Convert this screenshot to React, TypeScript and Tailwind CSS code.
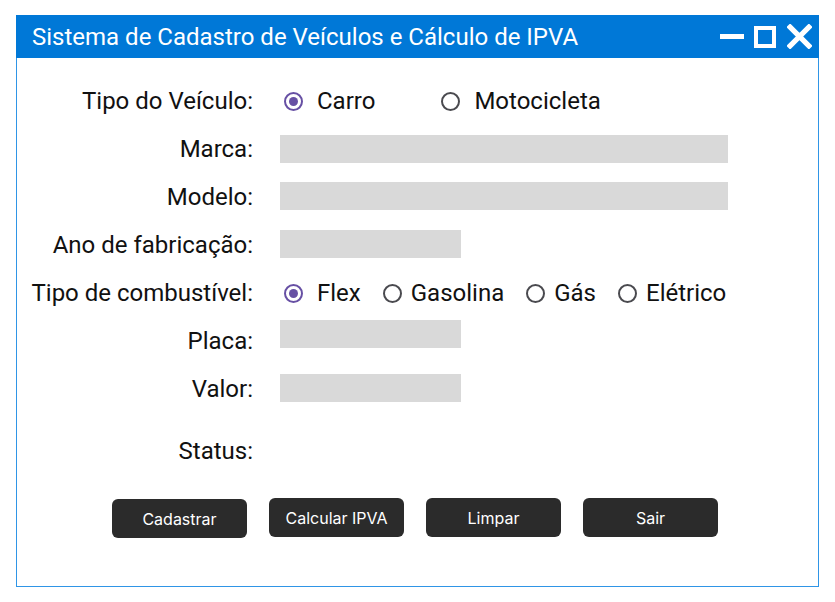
const FUEL = ['Flex', 'Gasolina', 'Gás', 'Elétrico'];

function Radio({label, checked, className = ''}: {label: string; checked?: boolean; className?: string}) {
  return (
    <label className={`flex items-center ${className}`}>
      <span
        className={`flex h-[19px] w-[19px] items-center justify-center rounded-full border-2 ${
          checked ? 'border-[#6750a4]' : 'border-[#4a4a4f]'
        }`}
      >
        {checked && <span className="h-[9px] w-[9px] rounded-full bg-[#6750a4]" />}
      </span>
      <span>{label}</span>
    </label>
  );
}

function Row({label, children, className = 'h-12'}: {label: string; children?: React.ReactNode; className?: string}) {
  return (
    <div className={`grid grid-cols-[236px_1fr] items-center ${className}`}>
      <span className="text-right">{label}</span>
      <div className="flex items-center pl-[27px]">{children}</div>
    </div>
  );
}

function Field({wide, className = ''}: {wide?: boolean; className?: string}) {
  return <div className={`h-7 bg-[#d9d9d9] ${wide ? 'w-[448px]' : 'w-[181px]'} ${className}`} />;
}

export default function App() {
  return (
    <div className="h-[602px] w-[835px] bg-white pl-4 pt-[15px]">
      <div className="flex h-[572px] w-[803px] flex-col border border-t-0 border-[#2f95e6]">
        {/* Title bar */}
        <div className="-mx-px flex h-[43px] items-center justify-between bg-[#0078d7] pl-[16px] pr-[7px] text-white">
          <span className="font-['Roboto',sans-serif] text-[24px] font-normal">
            Sistema de Cadastro de Veículos e Cálculo de IPVA
          </span>
          <div className="flex items-center">
            <div className="h-[5px] w-6 bg-white" />
            <div className="ml-[10px] h-[22px] w-[22px] border-[4px] border-white" />
            <svg viewBox="0 0 24 24" className="ml-[11px] h-[25px] w-[25px]">
              <path d="M3 3 L21 21 M21 3 L3 21" stroke="white" strokeWidth="5" strokeLinecap="square" />
            </svg>
          </div>
        </div>

        {/* Form */}
        <div className="flex flex-col pt-[19px] font-['Roboto',sans-serif] text-[24px] text-[#111]">
          <Row label="Tipo do Veículo:">
            <Radio label="Carro" checked className="ml-1 gap-[14px]" />
            <Radio label="Motocicleta" className="ml-[66px] gap-[14px]" />
          </Row>
          <Row label="Marca:">
            <Field wide />
          </Row>
          <Row label="Modelo:">
            <Field wide className="-mt-[2px]" />
          </Row>
          <Row label="Ano de fabricação:">
            <Field className="-mt-[2px]" />
          </Row>
          <Row label="Tipo de combustível:">
            <div className="ml-1 flex items-center gap-[22px]">
              {FUEL.map((f, i) => (
                <Radio key={f} label={f} checked={i === 0} className={i === 0 ? 'gap-[14px]' : 'gap-[9px]'} />
              ))}
            </div>
          </Row>
          <Row label="Placa:">
            <Field className="mb-[14px]" />
          </Row>
          <Row label="Valor:">
            <Field className="-mt-[2px]" />
          </Row>
          <Row label="Status:" className="mt-[14px] h-12" />
        </div>

        {/* Buttons */}
        <div className="mt-[23px] flex items-start gap-[22px] pl-[95px] font-['Inter',sans-serif] text-[16px] text-white">
          {['Cadastrar', 'Calcular IPVA', 'Limpar', 'Sair'].map((b, i) => (
            <button
              key={b}
              className={`h-[39px] w-[135px] rounded-[6px] bg-[#2b2b2b] ${i === 0 ? 'mt-px' : ''}`}
            >
              {b}
            </button>
          ))}
        </div>
      </div>
    </div>
  );
}
